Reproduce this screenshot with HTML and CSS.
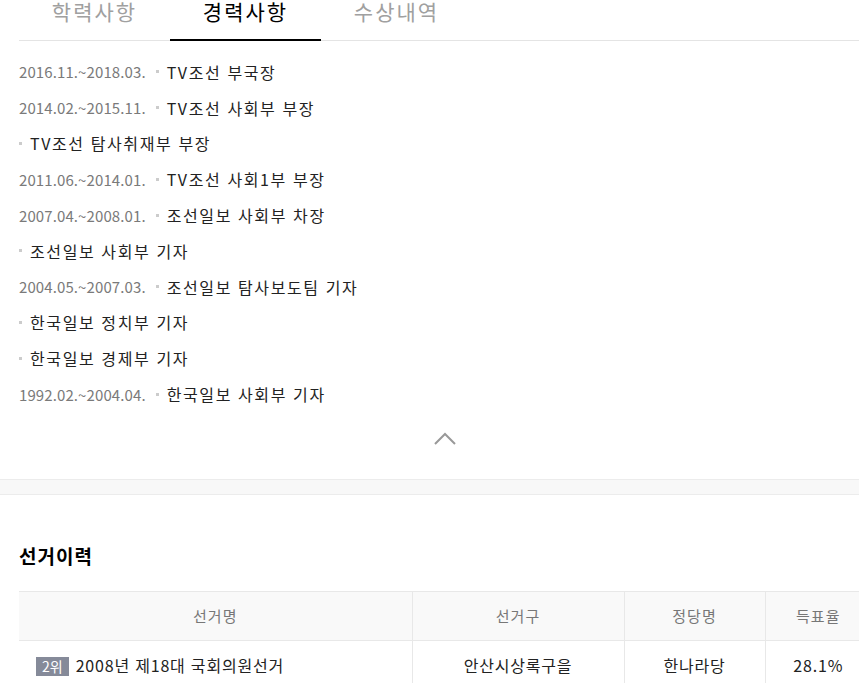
FILE: index.html
```html
<!DOCTYPE html>
<html lang="ko">
<head>
  <meta charset="UTF-8">
  <title>경력사항</title>
  <link rel="stylesheet" href="styles.css">
</head>
<body>
  <div class="page">
    <!-- tabs -->
    <ul class="tabs">
      <li class="tab">학력사항</li>
      <li class="tab active">경력사항</li>
      <li class="tab">수상내역</li>
    </ul>

    <!-- career list -->
    <ul class="career">
      <li><span class="date">2016.11.~2018.03.</span><span class="dot"></span><span class="desc">TV조선 부국장</span></li>
      <li><span class="date">2014.02.~2015.11.</span><span class="dot"></span><span class="desc">TV조선 사회부 부장</span></li>
      <li><span class="dot first"></span><span class="desc">TV조선 탐사취재부 부장</span></li>
      <li><span class="date">2011.06.~2014.01.</span><span class="dot"></span><span class="desc">TV조선 사회1부 부장</span></li>
      <li><span class="date">2007.04.~2008.01.</span><span class="dot"></span><span class="desc">조선일보 사회부 차장</span></li>
      <li><span class="dot first"></span><span class="desc">조선일보 사회부 기자</span></li>
      <li><span class="date">2004.05.~2007.03.</span><span class="dot"></span><span class="desc">조선일보 탐사보도팀 기자</span></li>
      <li><span class="dot first"></span><span class="desc">한국일보 정치부 기자</span></li>
      <li><span class="dot first"></span><span class="desc">한국일보 경제부 기자</span></li>
      <li><span class="date">1992.02.~2004.04.</span><span class="dot"></span><span class="desc">한국일보 사회부 기자</span></li>
    </ul>

    <div class="fold">
      <svg width="22" height="13" viewBox="0 0 22 13">
        <path d="M1 12 L11 2 L21 12" fill="none" stroke="#999" stroke-width="2"/>
      </svg>
    </div>
  </div>

  <div class="band"></div>

  <div class="page">
    <h3 class="title">선거이력</h3>
    <table class="elections">
      <thead>
        <tr>
          <th class="c-name">선거명</th>
          <th class="c-area">선거구</th>
          <th class="c-party">정당명</th>
          <th class="c-rate">득표율</th>
        </tr>
      </thead>
      <tbody>
        <tr>
          <td class="c-name left"><span class="rank">2위</span>2008년 제18대 국회의원선거</td>
          <td>안산시상록구을</td>
          <td>한나라당</td>
          <td>28.1%</td>
        </tr>
      </tbody>
    </table>
  </div>
</body>
</html>
```

FILE: styles.css
```css
* {
  margin: 0;
  padding: 0;
  box-sizing: border-box;
}

body {
  font-family: "Noto Sans CJK KR", "Noto Sans", sans-serif;
  background-color: #fff;
  color: #222;
  width: 871px;
  height: 683px;
  overflow: hidden;
}

.page {
  padding-left: 19px;
}

ul {
  list-style: none;
}

.tabs {
  display: flex;
  height: 41px;
  border-bottom: 1px solid #e4e4e4;
}

.tab {
  width: 151px;
  text-align: center;
  font-size: 21px;
  line-height: 23px;
  letter-spacing: 2px;
  color: #a0a0a0;
}

.tab.active {
  color: #000;
  border-bottom: 2px solid #000;
  margin-bottom: -1px;
}

.career {
  margin-top: 13px;
}

.career li {
  display: flex;
  align-items: center;
  height: 35.8px;
}

.date {
  font-size: 15px;
  color: #7a7a7a;
  letter-spacing: 0.1px;
}

.dot {
  width: 3px;
  height: 3px;
  background-color: #ccc;
  margin: 0 8px 0 10px;
}

.dot.first {
  margin-left: 0;
}

.desc {
  font-size: 16px;
  letter-spacing: 1.6px;
  color: #222;
}

.fold {
  width: 852px;
  height: 67px;
  display: flex;
  justify-content: center;
  padding-top: 20px;
}

.band {
  height: 16px;
  background-color: #f8f8f8;
  border-top: 1px solid #ececec;
  border-bottom: 1px solid #ececec;
}

.title {
  margin-top: 49px;
  font-size: 19px;
  line-height: 24px;
  font-weight: bold;
  letter-spacing: 1px;
  color: #000;
}

.elections {
  margin-top: 23px;
  width: 852px;
  border-collapse: collapse;
  border-top: 1px solid #e8e8e8;
}

.elections th {
  height: 49px;
  background-color: #f9f9f9;
  font-size: 15px;
  font-weight: normal;
  letter-spacing: 1px;
  color: #777;
  border-bottom: 1px solid #e8e8e8;
  border-left: 1px solid #e8e8e8;
}

.elections td {
  height: 49px;
  font-size: 16px;
  letter-spacing: 0.8px;
  text-align: center;
  color: #222;
  border-left: 1px solid #e8e8e8;
  border-bottom: 1px solid #e8e8e8;
}

.elections .c-name {
  width: 393px;
  border-left: none;
}

.elections .c-area {
  width: 212px;
}

.elections .c-party {
  width: 141px;
}

.elections td.left {
  text-align: left;
  padding-left: 17px;
}

.rank {
  display: inline-block;
  background-color: #858a99;
  color: #fff;
  font-size: 14px;
  line-height: 19px;
  letter-spacing: 0;
  padding: 0 6px;
  margin-right: 7px;
}
```
